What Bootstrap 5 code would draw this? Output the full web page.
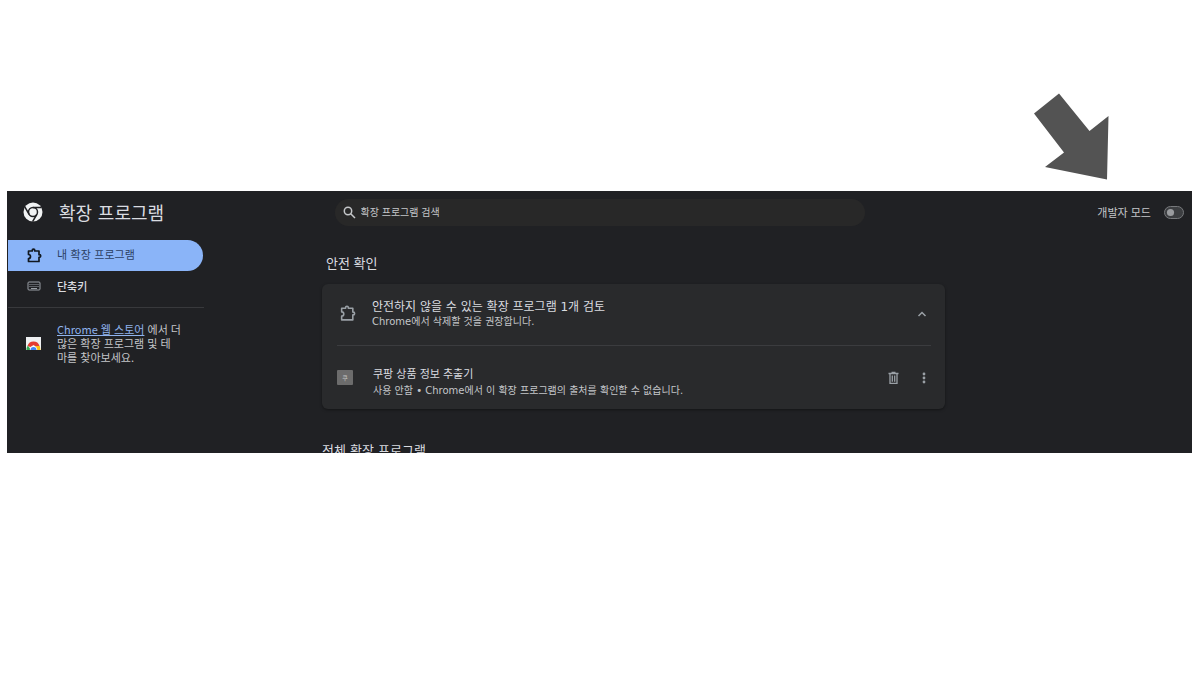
<!DOCTYPE html>
<html lang="ko">
<head>
<meta charset="utf-8">
<meta name="viewport" content="width=device-width, initial-scale=1">
<title>확장 프로그램</title>
<link href="https://cdn.jsdelivr.net/npm/bootstrap@5.3.0/dist/css/bootstrap.min.css" rel="stylesheet">
<style>
  body { font-family: "Noto Sans CJK KR", "Noto Sans", sans-serif; background: #fff; font-size: 11px; line-height: 14px; }
  .wide-face { font-family: "DejaVu Sans", "Noto Sans CJK KR", sans-serif; }
  .pointer-row { height: 191px; padding: 93px 83px 0 0; }
  .ext-window { margin: 0 8px 0 7px; height: 262px; background: #202124; color: #c4c6c9; }
  .top-bar { display: grid; grid-template-columns: 1fr 530px 1fr; height: 42px; }
  .brand { font-size: 18px; line-height: 24px; color: #dadce0; gap: 16px; padding-left: 16px; }
  .brand span { padding-top: 3px; }
  .search-box { height: 27px; border-radius: 14px; background: #282828; padding: 0 8px; gap: 5px; color: #c4c6c9; }
  .search-box input { font-size: 10px; line-height: 14px; color: inherit; outline: 0; }
  .search-box input::placeholder { color: #c4c6c9; opacity: 1; }
  .dev-mode { gap: 13px; padding-right: 8px; }
  .dev-mode .form-check-input { width: 20px; height: 13px; margin: 0; background-color: #3c3e41; border-color: #77797c; --bs-form-switch-bg: url("data:image/svg+xml,%3csvg xmlns='http://www.w3.org/2000/svg' viewBox='-4 -4 8 8'%3e%3ccircle r='2.600' fill='%239a9c9f'/%3e%3c/svg%3e"); }
  .side { width: 197px; padding: 7px 0 0 1px; }
  .side .nav-link { height: 31px; padding: 0 18px 1px; gap: 15px; color: #dadce0; font-weight: 500; }
  .side .nav-link.active { width: 195px; padding: 1px 18px 0; font-weight: 400; color: #2c4063; background: #8ab4f8; border-radius: 0 16px 16px 0; }
  .side .rule { border-top: 1px solid #38393c; margin-top: 5px; }
  .promo { padding: 14px 18px 0 17px; gap: 15px; }
  .promo a { color: #8fb2ec; }
  .content { max-width: 741px; padding: 20px 0 0 118px; }
  h2 { font-size: 13px; line-height: 20px; font-weight: 400; color: #dadce0; margin: 0; }
  .review { background: #292a2c; border-radius: 6px; margin-top: 11px; padding: 0 14px 0 15px; box-shadow: 0 1px 3px #0006; }
  .review-head { height: 62px; border-bottom: 1px solid #3b3c3f; padding: 0 2px 2px; }
  .review-head h3 { font-size: 12px; line-height: 16px; font-weight: 400; color: #dadce0; margin: 0; }
  .detail { font-size: 10px; }
  .review-item { height: 63px; line-height: 17px; }
  .letter-tile { width: 16px; height: 15px; background: #6c6c6c; color: #c5c5c5; font-size: 6px; line-height: 15px; border-radius: 1px; }
  .item-name { color: #dadce0; }
  .icon-btn { color: #9aa0a6; line-height: 0; }
  .all-title { margin-top: 32px; }
</style>
</head>
<body>
<div class="pointer-row d-flex justify-content-end">
  <svg width="84" height="88" viewBox="0 0 84 88" aria-hidden="true"><path fill="#535353" d="M26 .5 56.500 38 75.500 23 74 86.500 12 74 31 59.500 1 20.500Z"/></svg>
</div>
<div class="ext-window overflow-hidden">
  <header class="top-bar align-items-center">
    <div class="brand d-flex align-items-center">
      <svg width="20" height="20" viewBox="0 0 20 20" aria-hidden="true">
        <circle cx="10" cy="10" r="9.500" fill="#f1f3f4"/>
        <circle cx="10" cy="10" r="4.500" fill="none" stroke="#202124" stroke-width="1.500"/>
        <path d="M10 5.500H18.500M13.900 12.250 9.600 19.600M6.100 12.250 1.800 4.900" stroke="#202124" stroke-width="1.500"/>
      </svg>
      <span class="wide-face">확장 프로그램</span>
    </div>
    <label class="search-box d-flex align-items-center">
      <svg width="13" height="13" viewBox="0 0 13 13" fill="none" stroke="currentColor" stroke-width="1.500" aria-hidden="true"><circle cx="5" cy="5" r="3.700"/><path d="m7.700 7.700 4.300 4.300"/></svg>
      <input type="text" class="flex-grow-1 border-0 bg-transparent p-0" placeholder="확장 프로그램 검색" aria-label="확장 프로그램 검색">
    </label>
    <div class="dev-mode form-switch d-flex align-items-center justify-content-end ps-0">
      <label for="devMode">개발자 모드</label>
      <input class="form-check-input" type="checkbox" role="switch" id="devMode">
    </div>
  </header>
  <div class="d-flex">
    <aside class="side flex-shrink-0">
      <nav class="nav flex-column">
        <a class="nav-link active wide-face d-flex align-items-center" href="#">
          <svg width="16" height="16" viewBox="0 0 16 16" fill="none" stroke="#111820" stroke-width="1.700" stroke-linejoin="round" aria-hidden="true"><path d="M2.500 3h3.700V2.500a1.300 1.300 0 0 1 2.600 0V3H13v3.700h.4a1.300 1.300 0 0 1 0 2.600H13V13.500H2.500v-3a2 2 0 0 0 0-4Z"/></svg>
          내 확장 프로그램</a>
        <a class="nav-link d-flex align-items-center" href="#">
          <svg width="16" height="12" viewBox="0 0 16 12" fill="none" stroke="#9aa0a6" aria-hidden="true"><rect x="2" y="2" width="12" height="8" rx="1"/><path d="M3.500 4.500h9M3.500 6.500h9" stroke-dasharray="1 1"/><path d="M5 8.500h6"/></svg>
          단축키</a>
      </nav>
      <div class="rule"></div>
      <div class="promo d-flex align-items-center">
        <svg class="flex-shrink-0" width="17" height="15" viewBox="0 0 17 15" aria-hidden="true">
          <path fill="#eef0f2" d="M1 1h15v13H1z"/>
          <path fill="#e53c31" d="M2.500 10a6.300 6.300 0 0 1 12 0l-3 1-3-2-3 2Z"/>
          <path fill="#34a853" d="M1.500 14a7 7 0 0 1 1.300-4.500L6 14Z"/><path fill="#fbc116" d="M11 14l-.5-4h4.300l.7 4Z"/>
          <path fill="#fff" d="M4.800 14a3.700 3.700 0 0 1 7.400 0Z"/><path fill="#4285f4" d="M5.500 14a3 3 0 0 1 6 0Z"/>
        </svg>
        <div><a href="#">Chrome 웹 스토어</a> 에서 더<br>많은 확장 프로그램 및 테<br>마를 찾아보세요.</div>
      </div>
    </aside>
    <main class="content flex-grow-1">
      <h2 class="ps-1">안전 확인</h2>
      <section class="review">
        <div class="review-head d-flex align-items-center">
          <svg width="17" height="17" viewBox="0 0 16 16" fill="none" stroke="#9aa0a6" stroke-width="1.500" stroke-linejoin="round" aria-hidden="true"><path d="M2.500 3h3.700V2.500a1.300 1.300 0 0 1 2.600 0V3H13v3.700h.4a1.300 1.300 0 0 1 0 2.600H13V14H2.500v-3.500a2 2 0 0 0 0-4Z"/></svg>
          <div class="flex-grow-1 ms-3 wide-face">
            <h3>안전하지 않을 수 있는 확장 프로그램 1개 검토</h3>
            <div class="detail">Chrome에서 삭제할 것을 권장합니다.</div>
          </div>
          <button type="button" class="icon-btn border-0 bg-transparent p-0" aria-label="접기"><svg width="14" height="12" viewBox="0 0 14 12" fill="none" stroke="currentColor" stroke-width="1.500"><path d="m3.500 8 3.500-3.500L10.500 8"/></svg></button>
        </div>
        <div class="review-item d-flex align-items-center">
          <div class="letter-tile text-center">쿠</div>
          <div class="flex-grow-1 ps-1 ms-3 pt-2">
            <div class="item-name">쿠팡 상품 정보 추출기</div>
            <div class="detail wide-face">사용 안함 • Chrome에서 이 확장 프로그램의 출처를 확인할 수 없습니다.</div>
          </div>
          <button type="button" class="icon-btn border-0 bg-transparent p-0 me-3" aria-label="삭제"><svg width="14" height="14" viewBox="0 0 14 14" fill="none" stroke="currentColor"><path d="M1.500 2.500h10M4.500 1.500h4" stroke-width="1.300"/><path d="M3 3v9.300h7V3M5.300 4.500v6.300M7.700 4.500v6.300" stroke-width="1.300"/></svg></button>
          <button type="button" class="icon-btn border-0 bg-transparent p-0" aria-label="더보기"><svg width="14" height="14" viewBox="0 0 14 14" fill="currentColor"><circle cx="7" cy="3" r="1.400"/><circle cx="7" cy="7" r="1.400"/><circle cx="7" cy="11" r="1.400"/></svg></button>
        </div>
      </section>
      <h2 class="all-title wide-face">전체 확장 프로그램</h2>
    </main>
  </div>
</div>
<script src="https://cdn.jsdelivr.net/npm/bootstrap@5.3.0/dist/js/bootstrap.bundle.min.js"></script>
</body>
</html>
